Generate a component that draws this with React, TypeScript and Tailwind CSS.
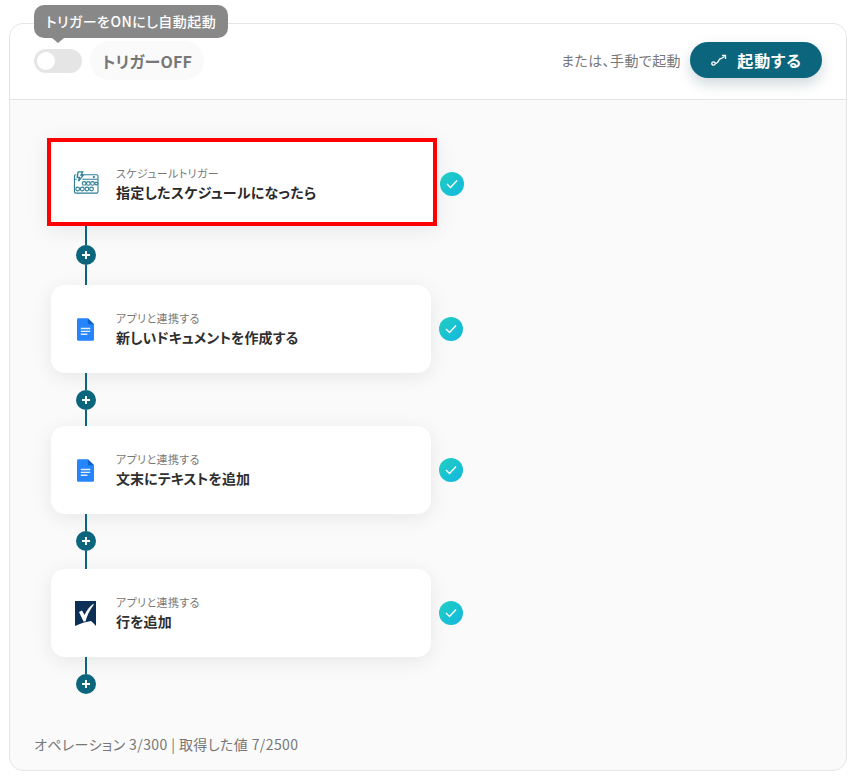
import React from "react";

const CalIcon = () => (
  <svg width="26" height="24" viewBox="0 0 28 26" fill="none" stroke="#2f7f95" strokeWidth="1.2">
    <path d="M7 4H25.500Q27 4 27 5.500V22.500Q27 24 25.500 24H3Q1.500 24 1.500 22.500V5.500Q1.500 4 3 4H3.500" />
    <path d="M1.500 9H4M10 9H27" />
    <path d="M5.500 1H10.500L8.500 4.500H11L6 11L6.800 7H4.500Z" strokeWidth="1.400" fill="#fff" />
    <circle cx="22.500" cy="6.500" r=".6" fill="#2f7f95" />
    {[12, 16.500, 21].map((x) => <circle key={x} cx={x} cy="13.500" r="2" />)}
    <circle cx="25" cy="13.500" r="1.500" />
    {[5, 10, 15, 20].map((x) => <circle key={x} cx={x} cy="19.500" r="2" />)}
  </svg>
);

const DocIcon = () => (
  <svg width="17" height="23" viewBox="0 0 18 24">
    <path d="M1.500 0H11.500L18 6.500V22.500Q18 24 16.500 24H1.500Q0 24 0 22.500V1.500Q0 0 1.500 0Z" fill="#2684fc" />
    <path d="M11.500 0L18 6.500H13Q11.500 6.500 11.500 5Z" fill="#0f5fc9" />
    <path d="M4 11H14M4 14H14M4 17H11" stroke="#e3efff" strokeWidth="1.500" />
  </svg>
);

const SheetIcon = () => (
  <svg width="21" height="25" viewBox="0 0 21 25">
    <path d="M0 0H21V25Q18 21.500 16 20Q8 21 0 25Z" fill="#0b2f56" />
    <path d="M4 11L7 9.500L9.500 14Q12 8 18 3L19 3.500Q13 11 10.500 20.500H8.500Z" fill="#fff" />
  </svg>
);

const Check = ({ className = "" }: { className?: string }) => (
  <div className={`w-6 h-6 rounded-full bg-gradient-to-br from-[#22cfc0] to-[#15b6e0] flex items-center justify-center shrink-0 ${className}`}>
    <svg width="12" height="10" viewBox="0 0 12 10" fill="none" stroke="#fff" strokeWidth="1.400">
      <path d="M1 5L4.500 8.500L11 1.500" />
    </svg>
  </div>
);

const Connector = ({ top, bottom }: { top: string; bottom: string }) => (
  <div className="flex flex-col items-center w-5 ml-[25px]">
    <div className={`w-[2px] bg-[#0b667d] ${top}`} />
    <div className="w-5 h-5 rounded-full bg-[#0b667d] flex items-center justify-center">
      <svg width="10" height="10" viewBox="0 0 10 10" stroke="#fff" strokeWidth="2">
        <path d="M5 1V9M1 5H9" />
      </svg>
    </div>
    <div className={`w-[2px] bg-[#0b667d] ${bottom}`} />
  </div>
);

const Step = ({ icon, sub, title }: { icon: React.ReactNode; sub: string; title: string }) => (
  <div className="flex items-center gap-2">
    <div className="w-[380px] h-[88px] bg-white rounded-[14px] shadow-[0_4px_20px_rgba(0,0,0,0.08)] flex items-center">
      <div className="w-[65px] flex justify-center pl-[4px] shrink-0">{icon}</div>
      <div className="mt-[-2px]">
        <div className="text-[11px] leading-[17px] tracking-[0.37px] text-[#777]">{sub}</div>
        <div className="text-[14px] leading-[20px] tracking-[0.08px] font-bold text-[#2f2f2f]">{title}</div>
      </div>
    </div>
    <Check />
  </div>
);

export default function App() {
  return (
    <div className="px-[9px] pt-[23px] font-['Noto_Sans_CJK_JP','Noto_Sans',sans-serif] [font-feature-settings:'palt']">
      <div className="relative w-[838px] h-[748px] border border-[#e5e5e5] rounded-[14px] bg-[#fafafa] flex flex-col">
        <div className="absolute left-[24px] top-[-19px] h-[33px] w-[194px] bg-[#888] rounded-[10px] text-white text-[14px] tracking-[0.45px] font-medium flex items-center justify-center z-10">
          トリガーをONにし自動起動
          <div className="absolute left-[18px] top-[33px] w-0 h-0 border-x-[6px] border-x-transparent border-t-[5px] border-t-[#888]" />
        </div>
        <div className="h-[76px] bg-white rounded-t-[14px] border-b border-[#e5e5e5] flex items-start justify-between pt-[17px] px-[24px] shrink-0">
          <div className="flex items-center gap-2">
            <div className="w-12 h-6 rounded-full bg-[#e5e5e5] flex items-center pl-[3px]">
              <div className="w-[18px] h-[18px] rounded-full bg-white" />
            </div>
            <div className="w-[114px] h-[39px] rounded-full bg-[#fafafa] text-[16px] tracking-[0.2px] font-bold text-[#777] flex items-center justify-center">
              トリガーOFF
            </div>
          </div>
          <div className="flex items-center gap-[9px] mt-[1px]">
            <span className="text-[14px] tracking-[0.4px] text-[#777]">または、手動で起動</span>
            <div className="w-[132px] h-9 rounded-full bg-[#0b667d] text-white text-[16px] tracking-[0.8px] font-bold flex items-center justify-center gap-[10px] shadow-[0_6px_14px_rgba(11,60,80,0.2)]">
              <svg width="16" height="12" viewBox="0 0 16 12" fill="none" stroke="#fff" strokeWidth="1.300" className="ml-[1px]">
                <circle cx="2.500" cy="9.500" r="1.700" />
                <path d="M4.500 9.500Q6.500 9.500 7.500 7Q8.500 4.500 10 4.500Q11 4.500 13.500 2.500" />
                <path d="M11 1.500H14.500V5" />
              </svg>
              起動する
            </div>
          </div>
        </div>
        <div className="flex-1 pl-[41px] pt-[38px]">
          <div className="flex items-center gap-[3px] ml-[-4px]">
            <div className="w-[390px] h-[88px] bg-white border-4 border-[#ff0000] shadow-[0_4px_20px_rgba(0,0,0,0.08)] flex items-center">
              <div className="w-[65px] flex justify-center pl-[4px] pt-[2px] shrink-0"><CalIcon /></div>
              <div className="mt-[3px]">
                <div className="text-[11px] leading-[17px] tracking-[0.37px] text-[#777]">スケジュールトリガー</div>
                <div className="text-[14px] leading-[20px] tracking-[0.27px] font-bold text-[#2a2a2a]">指定したスケジュールになったら</div>
              </div>
            </div>
            <Check className="mt-[4px]" />
          </div>
          <Connector top="h-[19px]" bottom="h-[20px]" />
          <Step icon={<DocIcon />} sub="アプリと連携する" title="新しいドキュメントを作成する" />
          <Connector top="h-[17px]" bottom="h-[16px]" />
          <Step icon={<DocIcon />} sub="アプリと連携する" title="文末にテキストを追加" />
          <Connector top="h-[17px]" bottom="h-[18px]" />
          <Step icon={<SheetIcon />} sub="アプリと連携する" title="行を追加" />
          <Connector top="h-[17px]" bottom="h-0" />
        </div>
        <div className="pl-[24px] pb-[16px] text-[14px] leading-[20px] tracking-[0.4px] text-[#777]">
          オペレーション 3/300 | 取得した値 7/2500
        </div>
      </div>
    </div>
  );
}
